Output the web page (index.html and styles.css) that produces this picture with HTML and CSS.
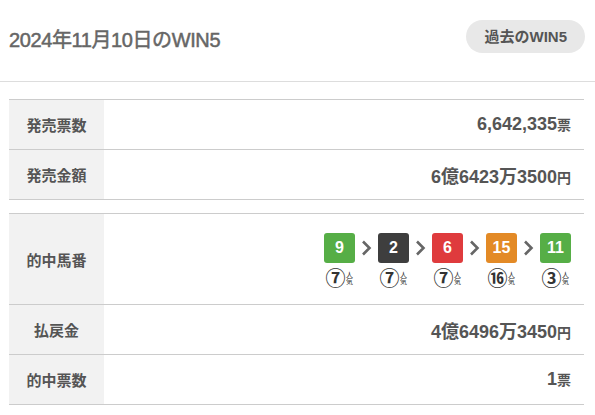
FILE: index.html
```html
<!DOCTYPE html>
<html lang="ja">
<head>
    <meta charset="UTF-8">
    <meta name="viewport" content="width=device-width, initial-scale=1.0">
    <title>2024年11月10日のWIN5</title>
    <link rel="stylesheet" href="styles.css">
</head>
<body>

<div class="header">
    <h1>2024年11月10日のWIN5</h1>
    <a class="past-btn" href="#">過去のWIN5</a>
</div>

<div class="content">
    <table class="result-table">
        <tr>
            <th>発売票数</th>
            <td>6,642,335<span class="unit">票</span></td>
        </tr>
        <tr>
            <th>発売金額</th>
            <td>6億6423万3500<span class="unit">円</span></td>
        </tr>
    </table>

    <table class="result-table">
        <tr class="horse-row">
            <th>的中馬番</th>
            <td>
                <div class="horses">
                    <div class="horse">
                        <span class="num green">9</span>
                        <span class="pop"><span class="rank">⑦</span><span class="pop-label">人気</span></span>
                    </div>
                    <svg class="arrow" width="23" height="30" viewBox="0 0 23 30"><polyline points="8,8.5 14.5,15 8,21.5" fill="none" stroke="#666" stroke-width="2.6"/></svg>
                    <div class="horse">
                        <span class="num dark">2</span>
                        <span class="pop"><span class="rank">⑦</span><span class="pop-label">人気</span></span>
                    </div>
                    <svg class="arrow" width="23" height="30" viewBox="0 0 23 30"><polyline points="8,8.5 14.5,15 8,21.5" fill="none" stroke="#666" stroke-width="2.6"/></svg>
                    <div class="horse">
                        <span class="num red">6</span>
                        <span class="pop"><span class="rank">⑦</span><span class="pop-label">人気</span></span>
                    </div>
                    <svg class="arrow" width="23" height="30" viewBox="0 0 23 30"><polyline points="8,8.5 14.5,15 8,21.5" fill="none" stroke="#666" stroke-width="2.6"/></svg>
                    <div class="horse">
                        <span class="num orange">15</span>
                        <span class="pop"><span class="rank">⑯</span><span class="pop-label">人気</span></span>
                    </div>
                    <svg class="arrow" width="23" height="30" viewBox="0 0 23 30"><polyline points="8,8.5 14.5,15 8,21.5" fill="none" stroke="#666" stroke-width="2.6"/></svg>
                    <div class="horse">
                        <span class="num green">11</span>
                        <span class="pop"><span class="rank">③</span><span class="pop-label">人気</span></span>
                    </div>
                </div>
            </td>
        </tr>
        <tr>
            <th>払戻金</th>
            <td>4億6496万3450<span class="unit">円</span></td>
        </tr>
        <tr>
            <th>的中票数</th>
            <td>1<span class="unit">票</span></td>
        </tr>
    </table>
</div>

</body>
</html>
```

FILE: styles.css
```css
body {
    font-family: "Liberation Sans", "Noto Sans CJK JP", sans-serif;
    color: #555;
    background-color: #fff;
    margin: 0;
}
.header {
    display: flex;
    align-items: center;
    justify-content: space-between;
    height: 81px;
    padding: 0 10px 0 9px;
    border-bottom: 1px solid #ddd;
}
h1 {
    margin: 0;
    font-size: 20px;
    font-weight: normal;
    letter-spacing: -0.4px;
    color: #666;
    -webkit-text-stroke: 0.5px #666;
    padding-bottom: 4px;
}
.past-btn {
    display: inline-block;
    background-color: #e8e8e8;
    color: #555;
    text-decoration: none;
    font-size: 15px;
    font-weight: bold;
    padding: 0 18px;
    height: 33px;
    line-height: 33px;
    border-radius: 17px;
    margin-bottom: 8px;
}
.content {
    padding: 17px 11px 0 9px;
}
.result-table {
    width: 100%;
    border-collapse: collapse;
    margin-bottom: 13px;
}
.result-table th,
.result-table td {
    border-top: 1px solid #ccc;
    border-bottom: 1px solid #ccc;
    height: 49px;
    padding: 0;
}
.result-table th {
    width: 95px;
    background-color: #f2f2f2;
    font-size: 15px;
    font-weight: bold;
    color: #555;
    text-align: center;
}
.result-table td {
    text-align: right;
    padding-right: 13px;
    font-size: 18px;
    font-weight: bold;
    color: #555;
}
.unit {
    font-size: 14px;
    font-weight: bold;
}
.horse-row th,
.horse-row td {
    height: 90px;
}
.horses {
    display: flex;
    justify-content: flex-end;
    align-items: flex-start;
    padding-top: 2px;
}
.horse {
    display: flex;
    flex-direction: column;
    align-items: center;
    width: 31px;
}
.num {
    display: block;
    width: 31px;
    height: 30px;
    line-height: 30px;
    border-radius: 3px;
    color: #fff;
    text-align: center;
    font-size: 16px;
    font-weight: bold;
}
.green {
    background-color: #56ae46;
}
.dark {
    background-color: #3e3e3e;
}
.red {
    background-color: #df3b3d;
}
.orange {
    background-color: #e38a26;
}
.arrow {
    display: block;
}
.pop {
    display: flex;
    align-items: center;
    margin-top: 6px;
    font-family: "Noto Sans CJK JP", sans-serif;
    font-weight: normal;
    color: #333;
    white-space: nowrap;
}
.rank {
    display: block;
    font-size: 20px;
    line-height: 18px;
    font-weight: bold;
}
.pop-label {
    display: block;
    writing-mode: vertical-rl;
    font-size: 7px;
    line-height: 8px;
}
```
